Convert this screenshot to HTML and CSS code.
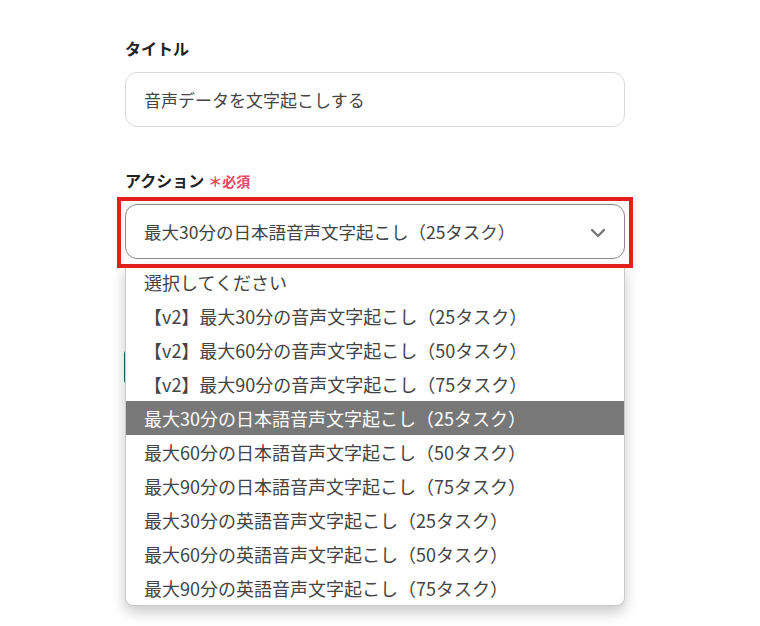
FILE: index.html
```html
<!DOCTYPE html>
<html lang="ja">
<head>
<meta charset="utf-8">
<link rel="stylesheet" href="styles.css">
</head>
<body>
<div class="page">
  <div class="label">タイトル</div>
  <div class="input">音声データを文字起こしする</div>

  <div class="label label-action">アクション<span class="req">＊必須</span></div>
  <div class="select-wrap">
    <div class="select">
      <span class="select-text">最大30分の日本語音声文字起こし（25タスク）</span>
      <svg class="chev" width="16" height="10" viewBox="0 0 16 10"><polyline points="2,2 8,8 14,2" fill="none" stroke="#777" stroke-width="2.4" stroke-linecap="round" stroke-linejoin="round"/></svg>
    </div>
    <div class="highlight"></div>
    <ul class="dropdown">
      <li>選択してください</li>
      <li>【v2】最大30分の音声文字起こし（25タスク）</li>
      <li>【v2】最大60分の音声文字起こし（50タスク）</li>
      <li>【v2】最大90分の音声文字起こし（75タスク）</li>
      <li class="active">最大30分の日本語音声文字起こし（25タスク）</li>
      <li>最大60分の日本語音声文字起こし（50タスク）</li>
      <li>最大90分の日本語音声文字起こし（75タスク）</li>
      <li>最大30分の英語音声文字起こし（25タスク）</li>
      <li>最大60分の英語音声文字起こし（50タスク）</li>
      <li>最大90分の英語音声文字起こし（75タスク）</li>
    </ul>
  </div>
  <div class="behind-btn"></div>
</div>
</body>
</html>
```

FILE: styles.css
```css
html, body {
  margin: 0;
  padding: 0;
  background: #ffffff;
  min-height: 626px;
}
body {
  font-family: "Noto Sans CJK JP", "Noto Sans", sans-serif;
  color: #333;
}
.page {
  width: 500px;
  min-height: 590px;
  padding: 36px 0 0 125px;
}
.label {
  font-size: 16px;
  font-weight: 700;
  line-height: 24px;
  height: 24px;
  color: #222;
}
.input {
  margin-top: 12px;
  box-sizing: border-box;
  height: 55px;
  border: 1px solid #d6d9df;
  border-radius: 12px;
  padding-left: 18px;
  font-size: 17px;
  line-height: 53px;
  color: #444;
}
.label-action {
  margin-top: 41px;
}
.req {
  color: #e8475f;
  font-size: 14px;
  margin-left: 4px;
  font-weight: 700;
}
.select-wrap {
  position: relative;
  margin-top: 12px;
}
.select {
  box-sizing: border-box;
  height: 55px;
  border: 1px solid #8a8a8a;
  border-radius: 12px;
  padding: 0 18px 0 18px;
  display: flex;
  align-items: center;
  justify-content: space-between;
  font-size: 17.5px;
  color: #444;
}
.chev {
  display: block;
  margin-top: 2px;
}
.highlight {
  position: absolute;
  left: -8px;
  right: -8px;
  top: -7px;
  bottom: -9px;
  border: 4px solid #e21e1e;
  z-index: 3;
  pointer-events: none;
}
.dropdown {
  position: absolute;
  left: 0;
  top: 61px;
  width: 500px;
  box-sizing: border-box;
  margin: 0;
  padding: 0;
  list-style: none;
  background: #fff;
  border: 1px solid #c9c9c9;
  border-top: none;
  border-radius: 0 0 8px 8px;
  box-shadow: 0 6px 14px rgba(0, 0, 0, 0.22);
  z-index: 2;
  overflow: hidden;
}
.dropdown li {
  height: 34px;
  line-height: 34px;
  padding-left: 18px;
  font-size: 18px;
  color: #444;
  white-space: nowrap;
}
.dropdown li.active {
  background: #787878;
  color: #fff;
}
.behind-btn {
  margin-top: 91px;
  margin-left: -1px;
  width: 220px;
  height: 34px;
  background: #2f6573;
  border-radius: 4px;
}
```
